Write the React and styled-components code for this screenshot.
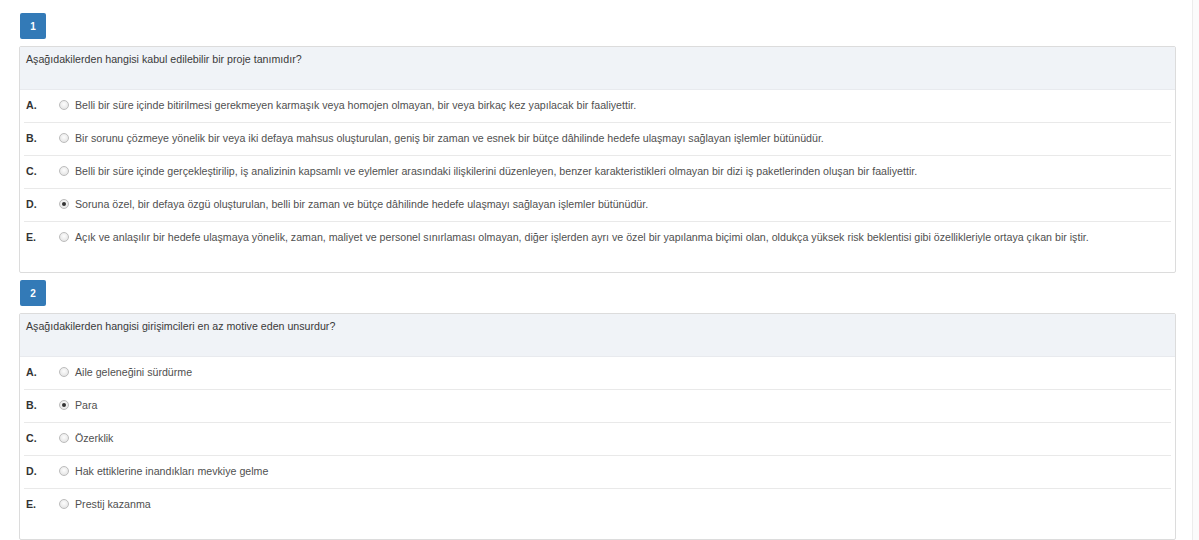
import React from "react";
import styled, { createGlobalStyle } from "styled-components";

const Global = createGlobalStyle`
  html, body { margin: 0; padding: 0; background: #fff; }
  body { font-family: "Liberation Sans", Arial, sans-serif; }
`;

const Page = styled.div`
  display: flex;
  width: 1199px;
  height: 540px;
  overflow: hidden;
`;

const Main = styled.div`
  flex: 1;
  padding: 13px 16px 0 19px;
  display: flex;
  flex-direction: column;
`;

const Strip = styled.div`
  width: 6px;
  border-left: 1px solid #ececec;
  background: #fbfbfb;
`;

const Block = styled.section`
  display: flex;
  flex-direction: column;
  margin-bottom: 7px;
`;

const Badge = styled.div`
  width: 26px;
  height: 26px;
  margin-left: 1px;
  margin-bottom: 7px;
  background: #337ab7;
  border-radius: 2px;
  color: #fff;
  font-size: 10px;
  font-weight: bold;
  display: flex;
  align-items: center;
  justify-content: center;
`;

const Panel = styled.div`
  border: 1px solid #dcdcdc;
  border-radius: 2px;
  background: #fff;
  padding-bottom: 17px;
`;

const Header = styled.div`
  height: 43px;
  box-sizing: border-box;
  padding: 5px 6px;
  background: #f0f3f7;
  border-bottom: 1px solid #e8eaee;
  color: #3a3a3a;
  font-size: 10.65px;
  line-height: 15px;
`;

const Row = styled.div`
  display: flex;
  align-items: flex-start;
  height: 33px;
  box-sizing: border-box;
  padding: 8px 2px 0 2px;
  margin: 0 4px;
  border-bottom: 1px solid #e9e9e9;
  &:last-child { border-bottom: none; }
`;

const Letter = styled.span`
  width: 33px;
  font-size: 10.65px;
  line-height: 15px;
  font-weight: bold;
  color: #333;
`;

const Radio = styled.span`
  width: 8px;
  height: 8px;
  margin-top: 2px;
  margin-right: 6px;
  border-radius: 50%;
  border: 1px solid #bcbcbc;
  background: radial-gradient(circle at 50% 40%, #fdfdfd 0%, #dedede 100%);
  position: relative;
  flex-shrink: 0;
  &::after {
    content: "";
    display: ${(p) => (p.$checked ? "block" : "none")};
    position: absolute;
    left: 2px;
    top: 2px;
    width: 4px;
    height: 4px;
    border-radius: 50%;
    background: #333;
  }
`;

const OptText = styled.span`
  font-size: 10.65px;
  line-height: 15px;
  color: #505050;
  white-space: nowrap;
`;

const questions = [
  {
    n: 1,
    q: "Aşağıdakilerden hangisi kabul edilebilir bir proje tanımıdır?",
    checked: 3,
    opts: [
      "Belli bir süre içinde bitirilmesi gerekmeyen karmaşık veya homojen olmayan, bir veya birkaç kez yapılacak bir faaliyettir.",
      "Bir sorunu çözmeye yönelik bir veya iki defaya mahsus oluşturulan, geniş bir zaman ve esnek bir bütçe dâhilinde hedefe ulaşmayı sağlayan işlemler bütünüdür.",
      "Belli bir süre içinde gerçekleştirilip, iş analizinin kapsamlı ve eylemler arasındaki ilişkilerini düzenleyen, benzer karakteristikleri olmayan bir dizi iş paketlerinden oluşan bir faaliyettir.",
      "Soruna özel, bir defaya özgü oluşturulan, belli bir zaman ve bütçe dâhilinde hedefe ulaşmayı sağlayan işlemler bütünüdür.",
      "Açık ve anlaşılır bir hedefe ulaşmaya yönelik, zaman, maliyet ve personel sınırlaması olmayan, diğer işlerden ayrı ve özel bir yapılanma biçimi olan, oldukça yüksek risk beklentisi gibi özellikleriyle ortaya çıkan bir iştir.",
    ],
  },
  {
    n: 2,
    q: "Aşağıdakilerden hangisi girişimcileri en az motive eden unsurdur?",
    checked: 1,
    opts: [
      "Aile geleneğini sürdürme",
      "Para",
      "Özerklik",
      "Hak ettiklerine inandıkları mevkiye gelme",
      "Prestij kazanma",
    ],
  },
];

const letters = ["A.", "B.", "C.", "D.", "E."];

export default function App() {
  return (
    <>
      <Global />
      <Page>
        <Main>
          {questions.map((qq) => (
            <Block key={qq.n}>
              <Badge>{qq.n}</Badge>
              <Panel>
                <Header>{qq.q}</Header>
                {qq.opts.map((o, i) => (
                  <Row key={i}>
                    <Letter>{letters[i]}</Letter>
                    <Radio $checked={i === qq.checked} />
                    <OptText>{o}</OptText>
                  </Row>
                ))}
              </Panel>
            </Block>
          ))}
        </Main>
        <Strip />
      </Page>
    </>
  );
}
